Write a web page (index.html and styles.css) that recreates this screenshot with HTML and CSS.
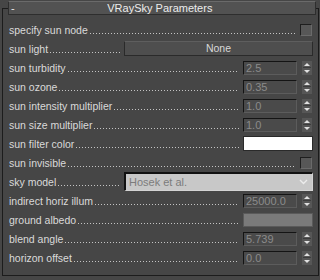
FILE: index.html
```html
<!DOCTYPE html>
<html lang="en">
<head>
    <meta charset="UTF-8" />
    <title>VRaySky Parameters</title>
    <link rel="stylesheet" href="styles.css">
</head>
<body>
    <div class="rollout">
        <div class="rollout-head">
            <span class="toggle">-</span>
            <span class="title">VRaySky Parameters</span>
        </div>

        <div class="rows">
            <div class="row">
                <span class="label">specify sun node</span><span class="dots"></span>
                <span class="check"></span>
            </div>
            <div class="row">
                <span class="label">sun light</span><span class="dots"></span>
                <span class="button">None</span>
            </div>
            <div class="row">
                <span class="label">sun turbidity</span><span class="dots"></span>
                <span class="spinner"><span class="value">2.5</span></span><span class="arrows"></span>
            </div>
            <div class="row">
                <span class="label">sun ozone</span><span class="dots"></span>
                <span class="spinner"><span class="value">0.35</span></span><span class="arrows"></span>
            </div>
            <div class="row">
                <span class="label">sun intensity multiplier</span><span class="dots"></span>
                <span class="spinner"><span class="value">1.0</span></span><span class="arrows"></span>
            </div>
            <div class="row">
                <span class="label">sun size multiplier</span><span class="dots"></span>
                <span class="spinner"><span class="value">1.0</span></span><span class="arrows"></span>
            </div>
            <div class="row">
                <span class="label">sun filter color</span><span class="dots"></span>
                <span class="swatch swatch-white"></span>
            </div>
            <div class="row">
                <span class="label">sun invisible</span><span class="dots"></span>
                <span class="check"></span>
            </div>
            <div class="row">
                <span class="label">sky model</span><span class="dots"></span>
                <span class="dropdown">
                    <span class="value">Hosek et al.</span>
                    <svg class="chevron" width="9" height="6" viewBox="0 0 9 6"><path d="M1 1 L4.5 4.5 L8 1" fill="none" stroke="#ececec" stroke-width="1.4"/></svg>
                </span>
            </div>
            <div class="row">
                <span class="label">indirect horiz illum</span><span class="dots"></span>
                <span class="spinner"><span class="value">25000.0</span></span><span class="arrows"></span>
            </div>
            <div class="row">
                <span class="label">ground albedo</span><span class="dots"></span>
                <span class="swatch swatch-gray"></span>
            </div>
            <div class="row">
                <span class="label">blend angle</span><span class="dots"></span>
                <span class="spinner"><span class="value">5.739</span></span><span class="arrows"></span>
            </div>
            <div class="row">
                <span class="label">horizon offset</span><span class="dots"></span>
                <span class="spinner"><span class="value">0.0</span></span><span class="arrows"></span>
            </div>
        </div>
    </div>
</body>
</html>
```

FILE: styles.css
```css
body {
    margin: 0;
    background: #464646;
    font-family: "Liberation Sans", Arial, sans-serif;
    font-size: 10.5px;
    color: #dadada;
    height: 280px;
    overflow: hidden;
}

.rollout {
    margin: 8px 1px 0 2px;
    height: 266px;
    border: 1px solid #1c1c1c;
    border-right-color: #1a1a1a;
}

.rollout-head {
    margin: -8px 2px 0 5px;
    height: 12px;
    background: #525252;
    border: 1px solid #2e2e2e;
    border-top-color: #6a6a6a;
    display: flex;
    align-items: center;
    position: relative;
    font-size: 11px;
}

.toggle {
    padding-left: 2px;
    color: #e6e6e6;
}

.title {
    flex: 1;
    text-align: center;
    padding-right: 10px;
    color: #ececec;
}

.rows {
    margin-top: 5px;
    padding: 0 5px 0 6px;
}

.row {
    height: 19px;
    display: flex;
    align-items: center;
}

.label {
    white-space: nowrap;
}

.dots {
    flex: 1;
    height: 1px;
    margin: 8px 4px 0 2px;
    background: linear-gradient(to right, #c4c4c4 1px, transparent 1px) repeat-x;
    background-size: 3px 1px;
}

.check {
    width: 10px;
    height: 10px;
    margin-right: 1px;
    background: #575757;
    border: 1px solid #1e1e1e;
    border-right-color: #6a6a6a;
    border-bottom-color: #6a6a6a;
}

.button {
    width: 187px;
    height: 13px;
    line-height: 13px;
    text-align: center;
    background: #4e4e4e;
    border: 1px solid #2a2a2a;
    border-top-color: #5e5e5e;
    color: #d8d8d8;
}

.spinner {
    width: 52px;
    height: 12px;
    line-height: 12px;
    background: #4a4a4a;
    border: 1px solid #5c5c5c;
    border-top-color: #141414;
    border-left-color: #141414;
    color: #8a8a8a;
    font-size: 11px;
}

.spinner .value {
    padding-left: 2px;
}

.arrows {
    width: 10px;
    height: 14px;
    margin: 0 1px 0 5px;
    background:
        linear-gradient(#3c3c3c, #3c3c3c) center / 8px 1px no-repeat,
        #565656;
    position: relative;
}

.arrows::before,
.arrows::after {
    content: "";
    position: absolute;
    left: 2px;
    border-left: 3px solid transparent;
    border-right: 3px solid transparent;
}

.arrows::before {
    top: 2px;
    border-bottom: 3px solid #e0e0e0;
}

.arrows::after {
    bottom: 2px;
    border-top: 3px solid #e0e0e0;
}

.swatch {
    width: 68px;
    height: 13px;
    border: 1px solid #2a2a2a;
}

.swatch-white {
    background: #ffffff;
}

.swatch-gray {
    height: 12px;
    background: #7a7a7a;
    border-color: #5a5a5a;
}

.dropdown {
    width: 186px;
    height: 16px;
    background: #c8c8c8;
    border: 1px solid #d4d4d4;
    border-top: 2px solid #111;
    border-left: 2px solid #111;
    display: flex;
    align-items: center;
    color: #7c7c7c;
    font-size: 11px;
}

.dropdown .value {
    flex: 1;
    padding-left: 3px;
}

.chevron {
    margin-right: 4px;
}
```
